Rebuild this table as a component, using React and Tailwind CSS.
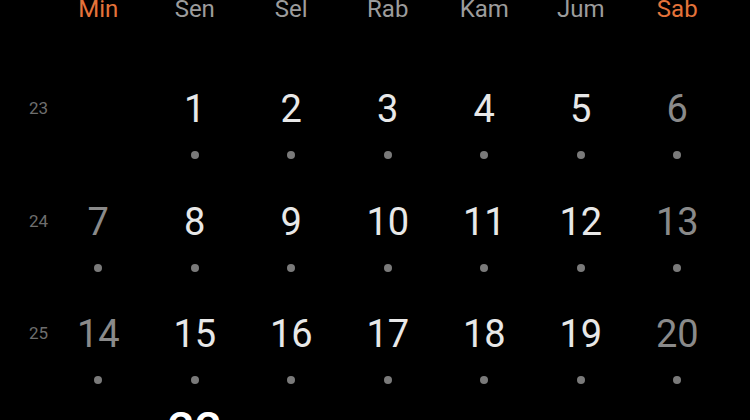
const days = [
  { label: 'Min', weekend: true },
  { label: 'Sen' },
  { label: 'Sel' },
  { label: 'Rab' },
  { label: 'Kam' },
  { label: 'Jum' },
  { label: 'Sab', weekend: true },
];

const weeks = [
  { no: 23, dates: [null, 1, 2, 3, 4, 5, 6] },
  { no: 24, dates: [7, 8, 9, 10, 11, 12, 13] },
  { no: 25, dates: [14, 15, 16, 17, 18, 19, 20] },
];

export default function App() {
  return (
    <div className="w-[750px] h-[420px] overflow-hidden bg-black flex flex-col font-['Roboto',sans-serif]">
      {/* Day names */}
      <div className="flex -mt-[5px] h-[28px] shrink-0">
        <div className="w-[50px] shrink-0" />
        {days.map((d) => (
          <div
            key={d.label}
            className={`w-[96.5px] shrink-0 text-center text-[24px] leading-[28px] ${
              d.weekend ? 'text-[#e5733a]' : 'text-[#9c9c9c]'
            }`}
          >
            {d.label}
          </div>
        ))}
      </div>

      <div className="mt-[55px] flex flex-col shrink-0">
        {weeks.map((w) => (
          <div key={w.no} className="flex h-[112.5px] pt-[11px] shrink-0">
            <div className="w-[50px] shrink-0 h-[40px] flex items-center pl-[29px] text-[17px] text-[#6e6e6e]">
              {w.no}
            </div>
            {w.dates.map((n, i) => {
              const weekend = i === 0 || i === 6;
              return (
                <div key={i} className="w-[96.5px] shrink-0 flex flex-col items-center">
                  {n !== null && (
                    <>
                      <div
                        className={`h-[40px] text-[38px] leading-[40px] ${
                          weekend ? 'text-[#8a8a8a]' : 'text-[#e8e8e8]'
                        }`}
                      >
                        {n}
                      </div>
                      <div className="mt-[22px] w-2 h-2 rounded-full bg-[#7a7a7a]" />
                    </>
                  )}
                </div>
              );
            })}
          </div>
        ))}

        {/* Next week, today highlighted */}
        <div className="flex h-[112.5px] pt-[11px] shrink-0">
          <div className="w-[50px] shrink-0 h-[40px] flex items-center pl-[29px] text-[17px] text-[#6e6e6e]">
            26
          </div>
          <div className="w-[96.5px] shrink-0" />
          <div className="w-[96.5px] shrink-0 flex flex-col items-center">
            <div className="-mt-[21px] text-[48px] leading-[48px] font-medium text-white">22</div>
          </div>
        </div>
      </div>
    </div>
  );
}
